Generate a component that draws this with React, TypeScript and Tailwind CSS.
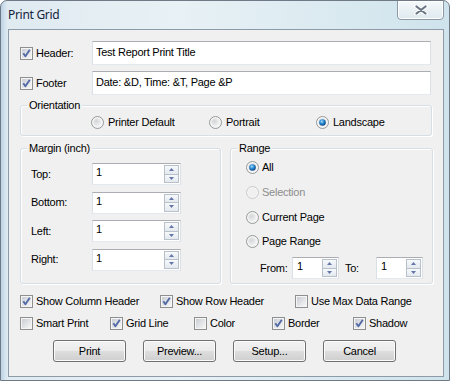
import React from "react";

function CheckBox({ checked }: { checked: boolean }) {
  return (
    <svg width="13" height="13" viewBox="0 0 13 13" className="shrink-0 block">
      <defs>
        <linearGradient id="cbFill" x1="0" y1="0" x2="1" y2="1">
          <stop offset="0" stopColor="#c9ced4" />
          <stop offset="1" stopColor="#f6f6f6" />
        </linearGradient>
      </defs>
      <rect x="0.5" y="0.5" width="12" height="12" fill="#f5f5f5" stroke="#8e8f8f" />
      <rect x="2" y="2" width="9" height="9" fill="url(#cbFill)" />
      {checked && (
        <path d="M3.3 6.2 L5.4 9.2 L9.8 2.8" fill="none" stroke="#536aa6" strokeWidth="1.9" strokeLinejoin="round" />
      )}
    </svg>
  );
}

function Radio({ checked, disabled }: { checked?: boolean; disabled?: boolean }) {
  return (
    <svg width="13" height="13" viewBox="0 0 13 13" className="shrink-0 block">
      <defs>
        <radialGradient id="rdInner" cx="0.35" cy="0.35" r="0.8">
          <stop offset="0" stopColor="#d3d5d8" />
          <stop offset="1" stopColor="#f9f9f9" />
        </radialGradient>
        <radialGradient id="rdDot" cx="0.4" cy="0.35" r="0.7">
          <stop offset="0" stopColor="#a6e0fb" />
          <stop offset="0.45" stopColor="#2c8ad2" />
          <stop offset="1" stopColor="#0a3f7c" />
        </radialGradient>
      </defs>
      <circle cx="6.5" cy="6.5" r="6" fill="#f4f4f4" stroke={disabled ? "#cbcbcb" : "#979899"} />
      <circle cx="6.5" cy="6.5" r="4.2" fill={disabled ? "#f0f0f0" : "url(#rdInner)"} />
      {checked && <circle cx="6.5" cy="6.5" r="3.3" fill="url(#rdDot)" />}
    </svg>
  );
}

function Arrow({ up }: { up?: boolean }) {
  return (
    <svg width="5" height="3" viewBox="0 0 5 3" className="block">
      {up ? <path d="M0 3 L2.5 0 L5 3 Z" fill="#6476a6" /> : <path d="M0 0 L2.5 3 L5 0 Z" fill="#6476a6" />}
    </svg>
  );
}

function SpinButtons() {
  return (
    <div className="flex flex-col w-[15px] h-full border border-[#b8c0ca]">
      <div className="flex-1 flex items-center justify-center border-b border-[#b8c0ca] bg-[linear-gradient(#f7f9fb,#e3e9ef)]">
        <Arrow up />
      </div>
      <div className="flex-1 flex items-center justify-center bg-[linear-gradient(#f7f9fb,#e3e9ef)]">
        <Arrow />
      </div>
    </div>
  );
}

function MarginRow({ label, first }: { label: string; first?: boolean }) {
  return (
    <div className={first ? "flex items-center" : "flex items-center mt-[6.5px]"}>
      <span className="w-[71px] pl-[10px]">{label}</span>
      <div className="flex h-[22px] w-[89px] bg-white border border-[#abadb3] border-l-[#dbdfe6] border-r-[#dbdfe6] border-b-[#e3e9ef] p-[1px]">
        <span className="flex-1 pl-[2px] leading-[14px]">1</span>
        <SpinButtons />
      </div>
    </div>
  );
}

function SmallSpin() {
  return (
    <div className="flex h-[22px] w-[47px] bg-white border border-[#abadb3] border-l-[#dbdfe6] border-r-[#dbdfe6] border-b-[#e3e9ef] p-[1px]">
      <span className="flex-1 pl-[3px] leading-[14px]">1</span>
      <SpinButtons />
    </div>
  );
}

function Group({ title, className, children }: { title: string; className: string; children: React.ReactNode }) {
  return (
    <div className={"relative border border-[#d5dfe5] rounded-[3px] shadow-[inset_1px_1px_0_#fff,1px_1px_0_#fff] " + className}>
      <span className="absolute left-[6px] top-[-8px] px-[2px] bg-[#f0f0f0] leading-[14px]">{title}</span>
      {children}
    </div>
  );
}

function Check({ label, checked, className }: { label: string; checked: boolean; className: string }) {
  return (
    <div className={"flex items-center gap-[3px] " + className}>
      <CheckBox checked={checked} />
      <span className="leading-[13px]">{label}</span>
    </div>
  );
}

function Btn({ label }: { label: string }) {
  return (
    <button className="w-[73px] h-[22px] rounded-[3px] border border-[#707070] bg-[linear-gradient(#f2f2f2_0%,#ebebeb_48%,#dddddd_52%,#cfcfcf_100%)] shadow-[inset_0_0_0_1px_#fbfbfb] text-[11px] tracking-[-0.25px] text-black leading-[18px]">
      {label}
    </button>
  );
}

export default function App() {
  return (
    <div className="relative w-[450px] h-[381px] overflow-hidden rounded-t-[7px] border border-[#6f7a86] bg-[linear-gradient(90deg,#bcd3e6_0px,#dfeaf1_6px,#e8f1f5_40%,#dcebf1_70%,#cfe3ec_100%)] font-['Liberation_Sans',Arial,sans-serif] text-[11px] tracking-[-0.25px] text-black">
      <div className="h-[28px] pl-[7px] flex items-center">
        <span className="font-['Noto_Sans',sans-serif] text-[12px] tracking-[-0.3px] text-[#14243d] pb-[1px]">Print Grid</span>
      </div>
      <div className="absolute top-[-1px] left-[396px] w-[47px] h-[20px] rounded-b-[4px] border border-[#8b98a6] bg-[linear-gradient(#f5f9fb,#dfe9ef)] shadow-[inset_0_0_0_1px_#fff] flex items-center justify-center">
        <svg width="14" height="10" viewBox="0 0 14 10">
          <path d="M2 1 L12 9 M12 1 L2 9" stroke="#fff" strokeWidth="4" strokeLinecap="round" />
          <path d="M2.5 1.5 L11.5 8.5 M11.5 1.5 L2.5 8.5" stroke="#6a7584" strokeWidth="2.2" strokeLinecap="round" />
        </svg>
      </div>
      <div className="ml-[7px] w-[436px] h-[348px] border border-[#8d9aa7] bg-[#f0f0f0] pt-[11px] pl-[11px]">
        <div className="flex items-center h-[24px]">
          <Check label="Header:" checked className="w-[72px]" />
          <div className="w-[339px] h-[24px] bg-white border border-[#abadb3] border-l-[#dbdfe6] border-r-[#dbdfe6] border-b-[#e3e9ef] pl-[3px] leading-[21px]">
            Test Report Print Title
          </div>
        </div>
        <div className="flex items-center h-[24px] mt-[6px]">
          <Check label="Footer" checked className="w-[72px]" />
          <div className="w-[339px] h-[24px] bg-white border border-[#abadb3] border-l-[#dbdfe6] border-r-[#dbdfe6] border-b-[#e3e9ef] pl-[3px] leading-[21px]">
            Date: &amp;D, Time: &amp;T, Page &amp;P
          </div>
        </div>
        <Group title="Orientation" className="mt-[10px] w-[412px] h-[31px] pt-[10px] pl-[70px]">
          <div className="flex">
            <div className="flex items-center gap-[4px] w-[118px]">
              <Radio />
              <span className="leading-[13px]">Printer Default</span>
            </div>
            <div className="flex items-center gap-[4px] w-[107px]">
              <Radio />
              <span className="leading-[13px]">Portrait</span>
            </div>
            <div className="flex items-center gap-[4px]">
              <Radio checked />
              <span className="leading-[13px]">Landscape</span>
            </div>
          </div>
        </Group>
        <div className="flex mt-[12px] h-[136px] gap-[9px]">
          <Group title="Margin (inch)" className="w-[201px] pt-[14px]">
            <MarginRow label="Top:" first />
            <MarginRow label="Bottom:" />
            <MarginRow label="Left:" />
            <MarginRow label="Right:" />
          </Group>
          <Group title="Range" className="w-[203px] pt-[12px] pl-[15px]">
            <div className="flex items-center gap-[3px] h-[13px]">
              <Radio checked />
              <span className="leading-[13px]">All</span>
            </div>
            <div className="flex items-center gap-[3px] h-[13px] mt-[12px] text-[#8d8d8d]">
              <Radio disabled />
              <span className="leading-[13px]">Selection</span>
            </div>
            <div className="flex items-center gap-[3px] h-[13px] mt-[12px]">
              <Radio />
              <span className="leading-[13px]">Current Page</span>
            </div>
            <div className="flex items-center gap-[3px] h-[13px] mt-[11px]">
              <Radio />
              <span className="leading-[13px]">Page Range</span>
            </div>
            <div className="flex items-center mt-[9px] pl-[14px]">
              <span className="w-[32px]">From:</span>
              <SmallSpin />
              <span className="w-[37px] pl-[6px]">To:</span>
              <SmallSpin />
            </div>
          </Group>
        </div>
        <div className="flex mt-[11px] h-[13px]">
          <Check label="Show Column Header" checked className="w-[140px]" />
          <Check label="Show Row Header" checked className="w-[135px]" />
          <Check label="Use Max Data Range" checked={false} className="" />
        </div>
        <div className="flex mt-[9px] h-[13px]">
          <Check label="Smart Print" checked={false} className="w-[90px]" />
          <Check label="Grid Line" checked className="w-[84px]" />
          <Check label="Color" checked={false} className="w-[78px]" />
          <Check label="Border" checked className="w-[81px]" />
          <Check label="Shadow" checked className="" />
        </div>
        <div className="flex mt-[10px] pl-[33px] gap-[17px]">
          <Btn label="Print" />
          <Btn label="Preview..." />
          <Btn label="Setup..." />
          <Btn label="Cancel" />
        </div>
      </div>
    </div>
  );
}
